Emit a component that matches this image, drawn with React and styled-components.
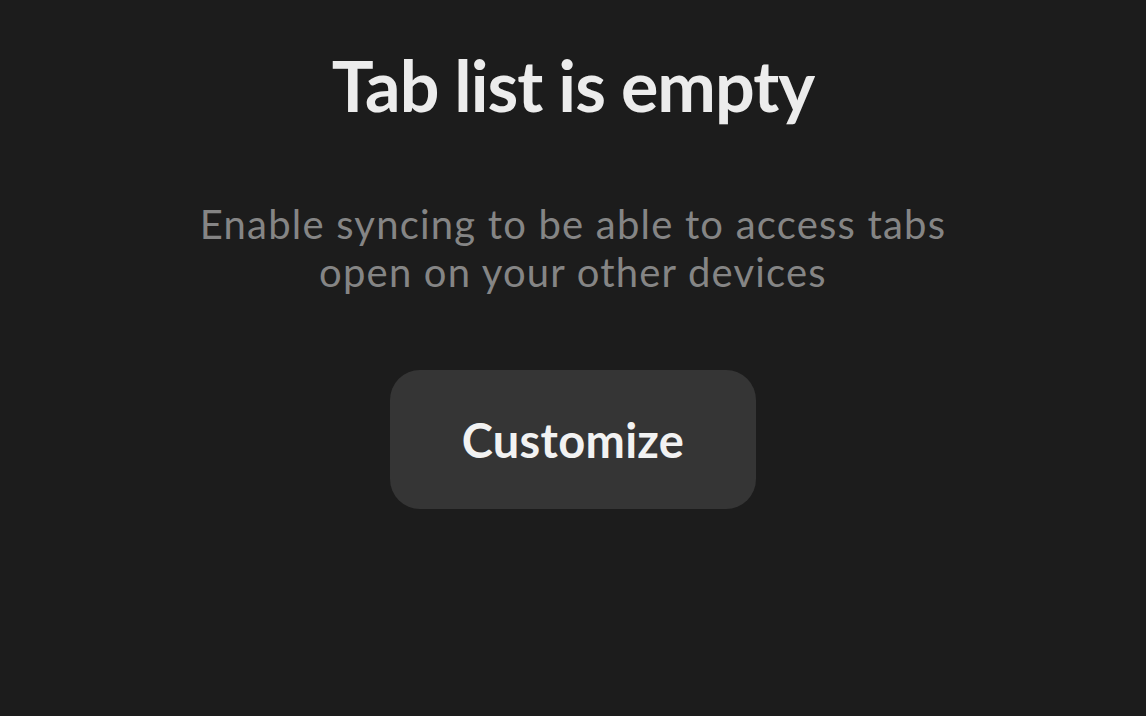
import React from 'react';
import styled, { createGlobalStyle } from 'styled-components';

const GlobalStyle = createGlobalStyle`
  html, body {
    margin: 0;
    padding: 0;
    background: #1c1c1c;
  }
  body {
    font-family: 'Lato', 'Noto Sans', sans-serif;
  }
`;

const App = () => {
  return (
    <>
      <GlobalStyle />
      <Wrapper>
        <Title>Tab list is empty</Title>
        <Subtitle>
          Enable syncing to be able to access tabs
          <br />
          open on your other devices
        </Subtitle>
        <Button>Customize</Button>
      </Wrapper>
    </>
  );
};

export default App;

const Wrapper = styled.main`
  width: 1146px;
  height: 716px;
  background-color: #1c1c1c;
  display: flex;
  flex-direction: column;
  align-items: center;
  padding-top: 47px;
  box-sizing: border-box;
`;

const Title = styled.h1`
  margin: 0;
  font-size: 70px;
  line-height: 76px;
  font-weight: 700;
  color: #ececec;
  letter-spacing: -1px;
`;

const Subtitle = styled.p`
  margin: 77px 0 0;
  font-size: 40px;
  line-height: 48px;
  font-weight: 400;
  color: #858585;
  letter-spacing: 1.2px;
  text-align: center;
`;

const Button = styled.button`
  margin-top: 74px;
  width: 366px;
  height: 139px;
  border: none;
  border-radius: 30px;
  background-color: #353535;
  color: #f2f2f2;
  font-family: inherit;
  font-size: 47px;
  font-weight: 700;
  letter-spacing: 0.3px;
  cursor: pointer;
`;
